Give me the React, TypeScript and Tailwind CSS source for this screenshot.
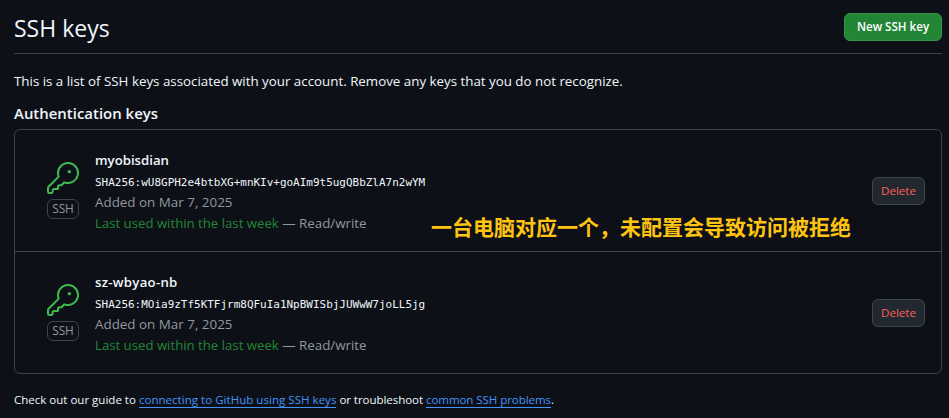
import { GoKey } from "react-icons/go";

type SshKey = { name: string; fingerprint: string; nameClass: string };

const keys: SshKey[] = [
  {
    name: "myobisdian",
    fingerprint: "SHA256:wU8GPH2e4btbXG+mnKIv+goAIm9t5ugQBbZlA7n2wYM",
    nameClass: "",
  },
  {
    name: "sz-wbyao-nb",
    fingerprint: "SHA256:MOia9zTf5KTFjrm8QFuIa1NpBWISbjJUWwW7joLL5jg",
    nameClass: "tracking-[0.28px]",
  },
];

function KeyRow({ item }: { item: SshKey }) {
  return (
    <li className="flex h-[122px] items-center border-b border-[#3d444d] pr-4 pl-8 last:h-[121px] last:border-b-0">
      <div className="mr-4 flex w-8 flex-col items-center pb-px">
        <GoKey className="size-8 text-[#3fb950]" />
        <span className="mt-[5px] flex h-5 w-8 items-center justify-center rounded-md border border-[#3d444d] text-[11.8px] text-[#9198a1]">
          SSH
        </span>
      </div>
      <div className="flex-1 pt-0.5 text-[13.4px] leading-[21px] whitespace-nowrap text-[#9198a1]">
        <div className={`text-[13.2px] font-semibold text-[#f0f6fc] ${item.nameClass}`}>{item.name}</div>
        <code className="block h-[21px] pt-px font-['DejaVu_Sans_Mono',monospace] text-[10.97px] text-[#f0f6fc]">
          {item.fingerprint}
        </code>
        <div>Added on Mar 7, 2025</div>
        <div className="text-[13.2px]">
          <span className="text-[#238636]">Last used within the last week</span>
          <span className="text-[13.35px]"> — Read/write</span>
        </div>
      </div>
      <button className="h-7 w-[53px] rounded-md border border-[#3d444d] bg-[#212830] text-[11.6px] font-medium text-[#ff5f57]">
        Delete
      </button>
    </li>
  );
}

export default function App() {
  return (
    <main className="relative h-[418px] w-full overflow-hidden bg-[#0d1117] pr-[7px] pl-3.5 font-['Open_Sans',sans-serif] text-[#f0f6fc]">
      <header className="flex h-[54px] items-center justify-between border-b border-[#3d444d]">
        <h1 className="pt-0.5 text-[23px] leading-9">SSH keys</h1>
        <button className="h-7 w-[98px] rounded-md border border-[#39914a] bg-[#238636] pt-px text-[11.6px] font-semibold text-white">
          New SSH key
        </button>
      </header>
      <p className="mt-[17px] text-[13.33px] leading-[21px]">
        This is a list of SSH keys associated with your account. Remove any keys that you do not recognize.
      </p>
      <h2 className="mt-[9px] text-[14.95px] leading-6 font-semibold">Authentication keys</h2>
      <ul className="mt-1 rounded-md border border-[#3d444d]">
        {keys.map((item) => (
          <KeyRow key={item.name} item={item} />
        ))}
      </ul>
      <p className="mt-4 text-[11.52px] leading-5">
        Check out our guide to{" "}
        <a className="border-b border-[#4493f8] tracking-[0.03px] text-[#4493f8]">connecting to GitHub using SSH keys</a>
        <span className="tracking-[-0.05px]"> or troubleshoot </span>
        <a className="border-b border-[#4493f8] tracking-[-0.06px] text-[#4493f8]">common SSH problems</a>.
      </p>
      <div className="absolute top-[211px] left-[431px] font-['Noto_Sans_CJK_SC',sans-serif] text-[21px] leading-[30px] font-bold whitespace-nowrap text-[#ffc412]">
        一台电脑对应一个，未配置会导致访问被拒绝
      </div>
    </main>
  );
}
